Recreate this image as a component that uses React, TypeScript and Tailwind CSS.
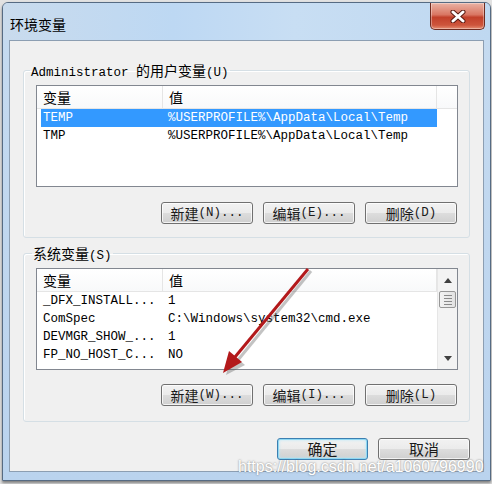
import React from 'react';

const userVars = [
  ['TEMP', '%USERPROFILE%\\AppData\\Local\\Temp'],
  ['TMP', '%USERPROFILE%\\AppData\\Local\\Temp'],
];

const sysVars = [
  ['_DFX_INSTALL...', '1'],
  ['ComSpec', 'C:\\Windows\\system32\\cmd.exe'],
  ['DEVMGR_SHOW_...', '1'],
  ['FP_NO_HOST_C...', 'NO'],
];

// SimSun-ish look: mono for latin, CJK glyphs a bit wider
function Mixed({ text }: { text: string }) {
  const parts = text.split(/([\u4e00-\u9fff]+)/);
  return (
    <>
      {parts.map((p, i) =>
        /[\u4e00-\u9fff]/.test(p) ? (
          <span key={i} className="font-['Noto_Sans_CJK_SC',sans-serif] text-[14px]">
            {p}
          </span>
        ) : (
          <span key={i}>{p}</span>
        )
      )}
    </>
  );
}

function Btn({ label }: { label: string }) {
  return (
    <button className="h-[22px] w-[92px] rounded-[3px] border border-[#707070] bg-[linear-gradient(#f2f2f2_0%,#ebebeb_50%,#dddddd_50%,#cfcfcf_100%)] shadow-[inset_0_0_0_1px_rgba(255,255,255,0.75)] flex items-center justify-center text-[12.5px] leading-[16px] text-[#1a1a1a] font-['Liberation_Mono','Noto_Sans_CJK_SC',monospace]">
      <Mixed text={label} />
    </button>
  );
}

function Scrollbar() {
  return (
    <div className="w-[20px] flex flex-col bg-[#f3f3f3] border-l border-[#e6e6e6]">
      <div className="h-[22px] flex items-center justify-center">
        <svg width="8" height="5" viewBox="0 0 8 5">
          <path d="M0 5 L4 0 L8 5 Z" fill="#404040" />
        </svg>
      </div>
      <div className="mx-[1px] h-[17px] rounded-[2px] border border-[#979797] bg-[linear-gradient(90deg,#f3f3f3,#e2e2e2)] flex flex-col items-center justify-center gap-[2px]">
        <div className="w-[8px] h-[1px] bg-[#8a8a8a]" />
        <div className="w-[8px] h-[1px] bg-[#8a8a8a]" />
        <div className="w-[8px] h-[1px] bg-[#8a8a8a]" />
        <div className="w-[8px] h-[1px] bg-[#8a8a8a]" />
      </div>
      <div className="flex-1" />
      <div className="h-[22px] flex items-center justify-center">
        <svg width="8" height="5" viewBox="0 0 8 5">
          <path d="M0 0 L8 0 L4 5 Z" fill="#404040" />
        </svg>
      </div>
    </div>
  );
}

function VarList({ rows, selected, scroll }: { rows: string[][]; selected?: number; scroll?: boolean }) {
  return (
    <div className="h-[102px] border border-[#828790] bg-white flex overflow-hidden">
      <div className="flex-1 flex flex-col">
        <div className="h-[23px] shrink-0 flex border-b border-[#e5e5e5] bg-[linear-gradient(#ffffff,#f8f9fa)]">
          <div className="w-[126px] pl-[6px] border-r border-[#e5e5e5] flex items-center leading-[16px]">
            <Mixed text="变量" />
          </div>
          <div className="w-[274px] pl-[6px] border-r border-[#e5e5e5] flex items-center leading-[16px]">
            <Mixed text="值" />
          </div>
          <div className="flex-1" />
        </div>
        {rows.map((r, i) => (
          <div
            key={i}
            className={`ml-[4px] w-[396px] h-[18px] shrink-0 flex items-center leading-[16px] whitespace-pre ${
              i === selected ? 'bg-[#3399ff] text-white' : 'text-black'
            }`}
          >
            <div className="w-[122px] pl-[2px]">{r[0]}</div>
            <div className="pl-[5px]">{r[1]}</div>
          </div>
        ))}
      </div>
      {scroll && <Scrollbar />}
    </div>
  );
}

export default function App() {
  return (
    <div className="relative w-[492px] h-[484px] overflow-hidden bg-[#e2e2e2]">
      <div className="ml-[2px] mt-[2px] w-[489px] h-[479px] flex flex-col rounded-t-[6px] border border-[#566b83] bg-[linear-gradient(#c6dbf0,#bad3ee)] shadow-[0_2px_3px_rgba(0,0,0,0.45)]">
        {/* title bar */}
        <div className="h-[37px] shrink-0 flex justify-between items-start rounded-t-[5px] bg-[linear-gradient(90deg,#c9dbed_0%,#bdd8f3_35%,#c8def3_60%,#bfd8f1_100%)]">
          <div className="pl-[7px] pt-[13px] text-[14px] leading-[16px] text-black font-['Noto_Sans_CJK_SC',sans-serif]">
            环境变量
          </div>
          <div className="mr-[5px] w-[55px] h-[27px] rounded-b-[5px] border border-t-0 border-[#6e2b20] bg-[linear-gradient(#eab3a5_0%,#d97662_45%,#c2402a_55%,#cd553c_85%,#e58e72_100%)] shadow-[inset_0_0_0_1px_rgba(255,255,255,0.35)] flex items-center justify-center">
            <svg width="18" height="13" viewBox="0 0 18 13">
              <path d="M4 2 L14 11 M14 2 L4 11" stroke="#5b1b12" strokeWidth="5" strokeLinecap="round" />
              <path d="M4 2 L14 11 M14 2 L4 11" stroke="#ffffff" strokeWidth="3" strokeLinecap="round" />
            </svg>
          </div>
        </div>

        {/* client area */}
        <div className="mx-[6px] h-[432px] shrink-0 flex flex-col border border-[#8c9eb2] bg-[#f0f0f0] text-[12.5px] text-black font-['Liberation_Mono','Noto_Sans_CJK_SC',monospace]">
          <fieldset className="mx-[13px] mt-[21px] pl-[12px] pr-[11px] pt-[7px] pb-[13px] border border-[#d5dfe5] rounded-[3px] shadow-[inset_1px_1px_0_#ffffff]">
            <legend className="-ml-[6px] px-[1px] h-[16px] leading-[16px]">
              <Mixed text="Administrator 的用户变量(U)" />
            </legend>
            <VarList rows={userVars} selected={0} />
            <div className="mt-[15px] flex justify-end gap-[10px] mr-[1px]">
              <Btn label="新建(N)..." />
              <Btn label="编辑(E)..." />
              <Btn label="删除(D)" />
            </div>
          </fieldset>

          <fieldset className="mx-[13px] mt-[7px] pl-[12px] pr-[11px] pt-[7px] pb-[15px] border border-[#d5dfe5] rounded-[3px] shadow-[inset_1px_1px_0_#ffffff]">
            <legend className="-ml-[4px] px-[1px] h-[16px] leading-[16px]">
              <Mixed text="系统变量(S)" />
            </legend>
            <VarList rows={sysVars} scroll />
            <div className="mt-[14px] flex justify-end gap-[10px] mr-[1px]">
              <Btn label="新建(W)..." />
              <Btn label="编辑(I)..." />
              <Btn label="删除(L)" />
            </div>
          </fieldset>

          <div className="mt-[16px] mr-[13px] flex justify-end gap-[10px]">
            <button className="h-[22px] w-[91px] rounded-[3px] border border-[#3c7fb1] bg-[linear-gradient(#f2f2f2_0%,#ebebeb_50%,#dddddd_50%,#cfcfcf_100%)] shadow-[inset_0_0_0_1px_#8fd8f3,inset_0_0_3px_1px_#b8e8f8] flex items-center justify-center text-[15px] leading-[16px] text-[#1a1a1a] font-['Noto_Sans_CJK_SC',sans-serif]">
              确定
            </button>
            <button className="h-[22px] w-[92px] rounded-[3px] border border-[#707070] bg-[linear-gradient(#f2f2f2_0%,#ebebeb_50%,#dddddd_50%,#cfcfcf_100%)] shadow-[inset_0_0_0_1px_rgba(255,255,255,0.75)] flex items-center justify-center text-[15px] leading-[16px] text-[#1a1a1a] font-['Noto_Sans_CJK_SC',sans-serif]">
              取消
            </button>
          </div>
        </div>
      </div>

      {/* red annotation arrow */}
      <svg className="absolute inset-0 pointer-events-none" width="492" height="484" viewBox="0 0 492 484">
        <g opacity="0.35" transform="translate(2 2)">
          <path d="M309 269 L236 358" stroke="#555" strokeWidth="3" />
          <path d="M224 373 L243 363 L230 352 Z" fill="#555" />
        </g>
        <path d="M308 269 L235 357" stroke="#b3191b" strokeWidth="3" />
        <path d="M223 373 L242 362 L229 351 Z" fill="#b3191b" />
      </svg>

      {/* blog watermark */}
      <div className="absolute left-[238px] top-[459px] text-[16px] leading-[16px] text-white font-['Liberation_Sans',sans-serif] [text-shadow:0_0_2px_rgba(70,70,70,0.75)] pointer-events-none">
        https://blog.csdn.net/a1060796990
      </div>
    </div>
  );
}
